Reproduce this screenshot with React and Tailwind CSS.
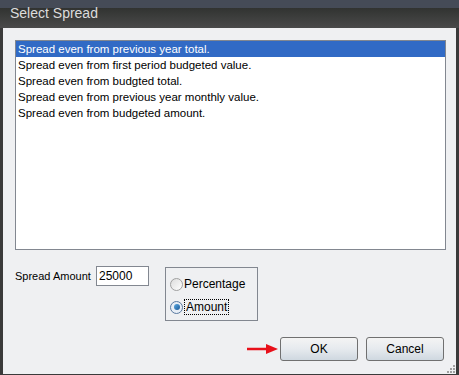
export default function App() {
  const rows = [
    "Spread even from previous year total.",
    "Spread even from first period budgeted value.",
    "Spread even from budgted total.",
    "Spread even from previous year monthly value.",
    "Spread even from budgeted amount.",
  ];
  return (
    <div className="w-[459px] h-[375px] flex flex-col bg-[#3a3a3a] overflow-hidden" style={{ fontFamily: '"Liberation Sans", Arial, sans-serif' }}>
      <div className="h-[28px] bg-[linear-gradient(to_bottom,#454b57_0px,#454b57_8px,#313331_8px,#4a4a4a_100%)] flex items-center pl-[10px] pb-[1px] text-[14px] text-[#dcdcdc]">
        Select Spread
      </div>
      <div className="flex-1 flex flex-col mx-[3px] mb-[1px] bg-[#eff0f2] relative">
        <div className="mt-[12px] ml-[12px] w-[431px] h-[210px] border border-[#828790] bg-white flex flex-col text-[11.5px] text-black">
          {rows.map((r, i) => (
            <div key={i} className={`h-[16px] leading-[16px] pl-[2px] whitespace-nowrap ${i === 0 ? "bg-[#316ac5] text-white" : ""}`}>{r}</div>
          ))}
        </div>
        <div className="flex mt-[17px] ml-[12px] text-black">
          <div className="mt-[1px] w-[81px] shrink-0 whitespace-nowrap text-[11px]">Spread Amount</div>
          <div className="w-[53px] h-[20px] border border-[#828790] bg-white pl-[2px] leading-[18px] mt-[-1px] text-[12px]">25000</div>
          <div className="ml-[16px] w-[93px] h-[54px] border border-[#828790] flex flex-col pl-[4px] pt-[7px] gap-[6px] text-[12px]">
            <div className="flex items-center gap-[1px]">
              <span className="w-[13px] h-[13px] rounded-full border border-[#a0a0a0] bg-gradient-to-br from-[#dcdcdc] to-[#ffffff]" />
              <span>Percentage</span>
            </div>
            <div className="flex items-center gap-[1px]">
              <span className="w-[13px] h-[13px] rounded-full border border-[#5a7aa0] bg-[#e8eef6] flex items-center justify-center">
                <span className="w-[6px] h-[6px] rounded-full bg-gradient-to-br from-[#5aa8e0] to-[#1a5a9a]" />
              </span>
              <span className="border border-dotted border-black px-[1px] leading-[14px]">Amount</span>
            </div>
          </div>
        </div>
        <div className="flex items-center mt-[16px] ml-[244px]">
          <svg width="31" height="10" viewBox="0 0 31 10" className="mr-[2px]">
            <line x1="0" y1="5" x2="22" y2="5" stroke="#e8101a" strokeWidth="2.5" />
            <polygon points="19,0 31,5 19,10" fill="#e8101a" />
          </svg>
          <button className="w-[78px] h-[24px] rounded-[3px] border border-[#707070] bg-gradient-to-b from-[#f4f4f4] via-[#e6eaee] to-[#cfd8e0] text-[12px] text-black">OK</button>
          <button className="ml-[8px] w-[78px] h-[24px] rounded-[3px] border border-[#707070] bg-gradient-to-b from-[#f4f4f4] via-[#e6eaee] to-[#cfd8e0] text-[12px] text-black">Cancel</button>
        </div>
        <div className="absolute right-[1px] bottom-[1px] grid grid-cols-3 gap-[1px] w-[8px]">
          <span /><span /><span className="w-[2px] h-[2px] bg-[#a0a0a0]" />
          <span /><span className="w-[2px] h-[2px] bg-[#a0a0a0]" /><span className="w-[2px] h-[2px] bg-[#a0a0a0]" />
          <span className="w-[2px] h-[2px] bg-[#a0a0a0]" /><span className="w-[2px] h-[2px] bg-[#a0a0a0]" /><span className="w-[2px] h-[2px] bg-[#a0a0a0]" />
        </div>
      </div>
    </div>
  );
}
